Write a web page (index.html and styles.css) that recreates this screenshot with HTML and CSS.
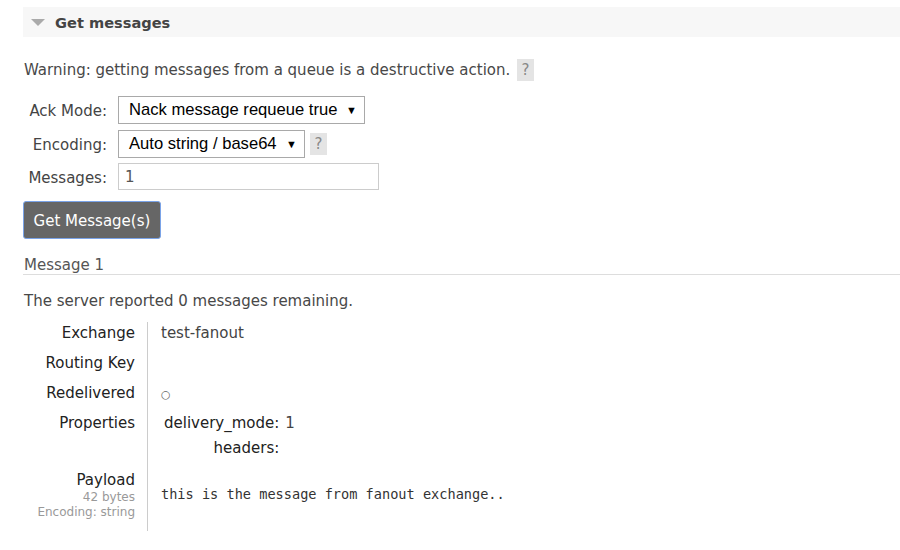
FILE: index.html
```html
<!DOCTYPE html>
<html>
<head>
<meta charset="utf-8">
<link rel="stylesheet" href="styles.css">
</head>
<body>
<div class="page">
  <div class="section-head"><span class="tri"></span><span class="title">Get messages</span></div>
  <p class="warn">Warning: getting messages from a queue is a destructive action. <span class="help">?</span></p>
  <div class="form">
    <div class="frow"><div class="flabel">Ack Mode:</div><div class="select sel-ack"><span class="val">Nack message requeue true</span><span class="arrow">▼</span></div></div>
    <div class="frow"><div class="flabel">Encoding:</div><div class="select sel-enc"><span class="val">Auto string / base64</span><span class="arrow">▼</span></div><span class="help help-sm">?</span></div>
    <div class="frow frow-last"><div class="flabel">Messages:</div><div class="input">1</div></div>
  </div>
  <div class="btn">Get Message(s)</div>
  <h3 class="msg-title">Message 1</h3>
  <p class="remain">The server reported 0 messages remaining.</p>
  <table class="facts">
    <tr><th>Exchange</th><td>test-fanout</td></tr>
    <tr><th>Routing Key</th><td></td></tr>
    <tr><th>Redelivered</th><td><span class="circ">○</span></td></tr>
    <tr class="props"><th>Properties</th><td>
      <table class="mini">
        <tr><th>delivery_mode:</th><td>1</td></tr>
        <tr><th>headers:</th><td></td></tr>
      </table>
    </td></tr>
    <tr class="payload"><th>Payload<div class="sub">42 bytes</div><div class="sub">Encoding: string</div></th><td><pre>this is the message from fanout exchange..</pre></td></tr>
  </table>
</div>
</body>
</html>
```
FILE: styles.css
```css
html, body { margin: 0; padding: 0; background: #fff; }
body { font-family: "DejaVu Sans", Verdana, sans-serif; font-size: 15px; color: #484848; }
.page { padding: 7px 0 0 23px; }
.section-head { height: 30px; background: #f7f7f7; display: flex; align-items: center; }
.tri { width: 0; height: 0; border-left: 7px solid transparent; border-right: 7px solid transparent; border-top: 7px solid #aaa; margin: 1px 10px 0 8px; }
.title { font-weight: bold; font-size: 14.6px; color: #444; }
.warn { margin: 22px 0 0 1px; line-height: 22px; }
.help { display: inline-block; width: 17px; height: 22px; line-height: 22px; text-align: center; background: #e4e4e4; color: #888; font-size: 15px; vertical-align: top; margin-left: 2px; }
.form { margin-top: 15px; display: flex; flex-direction: column; }
.frow { display: flex; align-items: center; margin-bottom: 6px; }
.frow-last { margin-top: -1px; margin-bottom: 0; }
.flabel { width: 84px; text-align: right; font-size: 15px; color: #444; margin-right: 11px; padding-top: 2px; }
.select { height: 28px; box-sizing: border-box; border: 1px solid #a9a9a9; display: flex; align-items: center; justify-content: space-between; padding: 0 7px 0 10px; font-family: "Liberation Sans", Arial, sans-serif; font-size: 16.6px; color: #000; background: #fff; white-space: nowrap; }
.val { flex-shrink: 0; }
.arrow { font-size: 11px; margin-left: 8px; flex-shrink: 0; }
.sel-ack { width: 247px; }
.sel-enc { width: 187px; }
.help-sm { margin-left: 5px; }
.input { width: 261px; height: 27px; box-sizing: border-box; border: 1px solid #ccc; padding: 3px 6px 1px; font-size: 15px; color: #555; line-height: 20px; }
.btn { margin-top: 11px; width: 138px; height: 38px; box-sizing: border-box; background: #666; color: #fff; border: 1px solid #7aa3e8; border-radius: 3px; display: flex; align-items: center; justify-content: center; font-size: 15px; padding-top: 2px; }
.msg-title { margin: 16px 0 0; font-weight: normal; font-size: 15px; color: #555; border-bottom: 1px solid #ddd; padding: 1px 0 0 1px; line-height: 18px; }
.remain { margin: 17px 0 0 1px; line-height: 18px; }
.facts { border-collapse: collapse; margin-top: 12px; }
.facts > tbody > tr > th { font-weight: normal; text-align: right; vertical-align: top; color: #222; font-size: 15px; width: 112px; padding: 1px 12px 0 0; height: 29px; line-height: 20px; border-right: 1px solid #ccc; }
.facts > tbody > tr > td { vertical-align: top; padding: 1px 0 0 13px; font-size: 15px; color: #444; line-height: 20px; }
.circ { font-size: 11px; color: #666; }
.mini { border-collapse: collapse; margin-left: 3px; }
.mini th { font-weight: normal; text-align: right; padding: 0 6px 0 0; color: #222; height: 25px; vertical-align: top; line-height: 20px; }
.mini td { padding: 0; color: #444; vertical-align: top; line-height: 20px; }
.facts > tbody > tr.props > th { height: 56px; }
.facts > tbody > tr.payload > th { padding-bottom: 12px; height: auto; }
.payload th .sub { font-size: 12px; color: #999; line-height: 14.5px; }
.facts > tbody > tr.payload > td { vertical-align: middle; }
.payload pre { margin: 0 0 13px; font-family: "DejaVu Sans Mono", Consolas, monospace; font-size: 13.6px; color: #333; }
```
